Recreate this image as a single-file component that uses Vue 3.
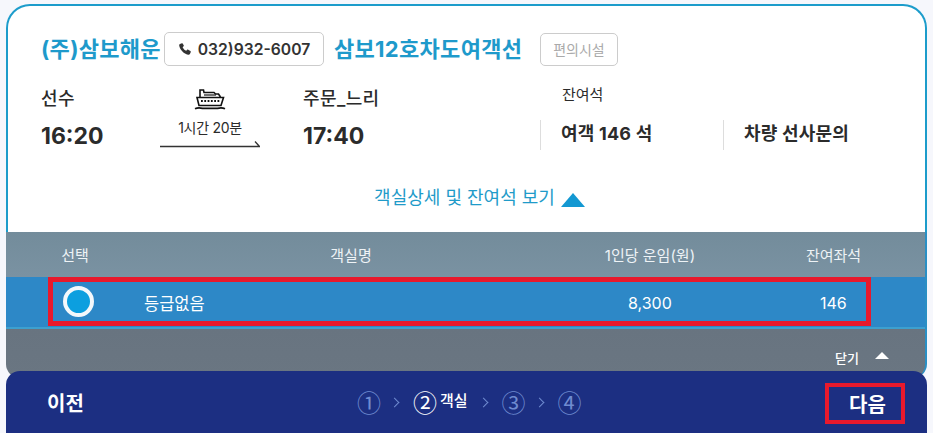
<script setup>
const columns = ['선택', '객실명', '1인당 운임(원)', '잔여좌석']
const steps = [
  { mark: '①' },
  { mark: '②', label: '객실', active: true },
  { mark: '③' },
  { mark: '④' },
]
</script>

<template>
  <div class="page">
    <section class="summary">
      <div class="title-row">
        <h2 class="company">(주)삼보해운</h2>
        <button class="phone">
          <svg class="phone-icon" viewBox="0 0 24 24" aria-hidden="true">
            <path d="M6.6 2.2 3.4 3.6C2.2 4.2 1.8 5.4 2.2 6.8c1.6 7 7.9 13.4 15 15 1.4.4 2.6 0 3.2-1.2l1.4-3.2c.3-.7.1-1.4-.5-1.8l-3.8-2.4c-.6-.4-1.3-.3-1.8.2l-1.6 1.7c-2.6-1.2-5-3.7-6.2-6.3l1.7-1.5c.5-.5.6-1.2.2-1.8L7.9 2.700c-.3-.6-.7-.7-1.300-.5Z" />
          </svg>
          032)932-6007
        </button>
        <h2 class="ship">삼보12호차도여객선</h2>
        <button class="facility">편의시설</button>
      </div>

      <div class="route">
        <div class="port">
          <div class="port-name">선수</div>
          <div class="time">16:20</div>
        </div>
        <div class="trip">
          <svg class="ferry" viewBox="0 0 32 22" aria-hidden="true">
            <g fill="none" stroke="#111" stroke-width="1.600">
              <path d="M6 9V2h3.500l.5 2.500h10l1.500 1.500h3l2 3" />
              <path d="M10 7h12" stroke-width="1.200" />
              <path d="M3 9.500h26.500L27 17.500H5Z" />
            </g>
            <path d="M7 13h19" stroke="#111" stroke-width="1.800" stroke-dasharray="1.800 1.500" />
            <path d="M1 20.800c2.500-1.200 4.500-1.200 7.500-.4h15c3-.8 5-.8 7.500.4" fill="none" stroke="#111" stroke-width="1.800" />
          </svg>
          <div class="duration">1시간 20분</div>
          <svg class="arrow" viewBox="0 0 100 8" aria-hidden="true">
            <path d="M0 6.500h99.500L95 1.500" fill="none" stroke="#333" stroke-width="1.300" />
          </svg>
        </div>
        <div class="port">
          <div class="port-name">주문_느리</div>
          <div class="time">17:40</div>
        </div>
        <div class="seats">
          <div class="seats-label">잔여석</div>
          <div class="seats-row">
            <div class="seat-cell seat-cell-first">여객 146 석</div>
            <div class="seat-cell">차량 선사문의</div>
          </div>
        </div>
      </div>

      <div class="toggle">
        객실상세 및 잔여석 보기
        <span class="toggle-arrow"></span>
      </div>
    </section>

    <section class="cabins">
      <div class="cabin-head">
        <span v-for="col in columns" :key="col">{{ col }}</span>
      </div>
      <div class="cabin-row">
        <div class="cabin-inner">
          <span class="radio"></span>
          <span class="grade">등급없음</span>
          <span class="fare">8,300</span>
          <span class="left">146</span>
        </div>
      </div>
      <div class="close-row">
        닫기
        <span class="close-arrow"></span>
      </div>
    </section>

    <footer class="footer">
      <span class="prev">이전</span>
      <div class="steps">
        <template v-for="(step, i) in steps" :key="step.mark">
          <span class="chev" v-if="i > 0"></span>
          <span class="step" :class="{ active: step.active }">
            <span class="mark">{{ step.mark }}</span>
            <span v-if="step.label" class="step-label">{{ step.label }}</span>
          </span>
        </template>
      </div>
      <span class="next">다음</span>
    </footer>
  </div>
</template>

<style>
html, body {
  margin: 0;
  background: #f6f7fc;
  overflow: hidden;
}
</style>

<style scoped>
.page {
  width: 921px;
  height: 429px;
  padding: 4px 0 0 6px;
  font-family: Inter, "Noto Sans CJK KR", sans-serif;
  color: #2b2b2b;
  display: flex;
  flex-direction: column;
  overflow: hidden;
}
.summary {
  height: 228px;
  box-sizing: border-box;
  background: #fff;
  border: 2px solid #1c9ccb;
  border-bottom: 0;
  border-radius: 24px 24px 0 0;
  padding: 26px 0 0 33px;
  flex: none;
}
.title-row {
  display: flex;
  align-items: center;
  height: 34px;
}
.company, .ship {
  margin: 0;
  font-size: 22px;
  line-height: 30px;
  font-weight: 700;
  color: #1e9acb;
  letter-spacing: 0.3px;
  white-space: nowrap;
}
.company { width: 123px; }
.ship { width: 206px; }
button {
  font-family: inherit;
  background: #fff;
  border: 1px solid #ccc;
  border-radius: 5px;
  padding: 0;
}
.phone {
  width: 160px;
  height: 34px;
  margin-right: 10px;
  display: flex;
  align-items: center;
  justify-content: center;
  gap: 6px;
  font-size: 15.700px;
  font-weight: 600;
  color: #333;
}
.phone-icon {
  width: 14px;
  height: 14px;
  fill: #333;
}
.facility {
  width: 78px;
  height: 33px;
  font-size: 14px;
  color: #aaa;
}
.route {
  display: flex;
  margin-top: 21px;
  height: 72px;
}
.port { width: 120px; }
.port-name {
  font-size: 18px;
  line-height: 24px;
  font-weight: 500;
  white-space: nowrap;
  letter-spacing: 0.4px;
}
.time {
  font-size: 23px;
  line-height: 30px;
  font-weight: 700;
  margin-top: 10px;
}
.trip {
  width: 100px;
  margin: 0 43px 0 -1px;
  display: flex;
  flex-direction: column;
  align-items: center;
}
.ferry {
  width: 32px;
  height: 22px;
  margin-top: 1px;
  flex: none;
}
.duration {
  font-size: 14px;
  line-height: 18px;
  margin-top: 9px;
  white-space: nowrap;
  letter-spacing: -0.3px;
}
.arrow {
  width: 100px;
  height: 8px;
  flex: none;
  margin-top: 3px;
}
.seats {
  margin-left: 117px;
  width: 380px;
}
.seats-label {
  font-size: 15px;
  line-height: 20px;
  padding-left: 22px;
  margin-top: -2px;
}
.seats-row {
  display: flex;
  margin-top: 15px;
  height: 30px;
}
.seat-cell {
  width: 183px;
  box-sizing: border-box;
  border-left: 1px solid #ddd;
  padding-left: 20px;
  font-size: 18px;
  line-height: 27px;
  font-weight: 700;
  white-space: nowrap;
  letter-spacing: 0.2px;
}
.toggle {
  margin-top: 28px;
  display: flex;
  justify-content: center;
  align-items: center;
  gap: 6px;
  font-size: 18px;
  line-height: 22px;
  color: #1f9bc9;
  margin-right: 7px;
}
.toggle-arrow {
  width: 0;
  height: 0;
  margin-top: 4px;
  border-left: 12px solid transparent;
  border-right: 12px solid transparent;
  border-bottom: 14px solid #1398d2;
}
.cabins {
  flex: none;
  height: 146px;
  box-sizing: border-box;
  border-right: 2px solid #2a8fc4;
  border-radius: 0 0 14px 14px;
  background: linear-gradient(#64707c, #6a7682);
  color: #eef3f6;
  display: flex;
  flex-direction: column;
}
.cabin-head {
  height: 45px;
  flex: none;
  background: linear-gradient(#738c9b, #7a92a2);
  display: grid;
  grid-template-columns: 138px 414px 184px 183px;
  align-items: center;
  font-size: 15px;
  line-height: 1;
  text-align: center;
  padding-top: 1px;
  box-sizing: border-box;
}
.cabin-row {
  height: 52px;
  flex: none;
  box-sizing: border-box;
  background: #2d88c7;
  padding: 0 54px 3px 42px;
  border-bottom: 2px solid #3da0cf;
}
.cabin-inner {
  height: 49px;
  box-sizing: border-box;
  border: 5px solid #e8192c;
  display: flex;
  align-items: center;
  color: #fff;
  position: relative;
  padding-top: 2px;
}
.radio {
  width: 23px;
  height: 23px;
  margin-left: 10px;
  margin-top: -2px;
  box-sizing: content-box;
  border: 4px solid #f4f8fb;
  border-radius: 50%;
  background: #0c9fdf;
  flex: none;
}
.grade {
  margin-left: 50px;
  font-size: 16.500px;
  width: 484px;
}
.fare {
  font-size: 16px;
  width: 192px;
}
.left { font-size: 16px; }
.close-row {
  display: flex;
  align-items: center;
  justify-content: flex-end;
  height: 20px;
  margin-top: 18px;
  padding-right: 36px;
  font-size: 13px;
  font-weight: 500;
  color: #fff;
  gap: 16px;
}
.close-arrow {
  width: 0;
  height: 0;
  border-left: 7px solid transparent;
  border-right: 7px solid transparent;
  border-bottom: 7px solid #fff;
  margin-top: -3px;
}
.footer {
  flex: none;
  height: 62px;
  margin-top: -7px;
  width: 921px;
  background: #1c2f82;
  border-radius: 14px 14px 0 0;
  position: relative;
  display: flex;
  align-items: center;
  color: #fff;
  box-sizing: border-box;
  padding: 0 22px 0 41px;
}
.prev {
  width: 310px;
  font-size: 20px;
  font-weight: 700;
}
.steps {
  display: flex;
  align-items: center;
  flex: 1;
  color: #6f8bd0;
  font-family: "Noto Sans CJK KR", sans-serif;
}
.step {
  display: flex;
  align-items: center;
}
.mark {
  font-size: 24px;
  line-height: 30px;
  width: 24px;
  text-align: center;
}
.active { color: #fff; }
.step-label {
  font-size: 15px;
  font-weight: 500;
  line-height: 20px;
  margin: -4px 2px 0 3px;
}
.chev {
  width: 6px;
  height: 6px;
  border-top: 1px solid #6f8bd0;
  border-right: 1px solid #6f8bd0;
  transform: rotate(45deg);
  margin: 0 15px 0 10px;
}
.next {
  width: 67px;
  height: 33px;
  border: 4px solid #e8192c;
  display: flex;
  align-items: center;
  justify-content: center;
  font-size: 20px;
  font-weight: 700;
  margin-top: 3px;
  padding-left: 5px;
  box-sizing: content-box;
}
</style>
